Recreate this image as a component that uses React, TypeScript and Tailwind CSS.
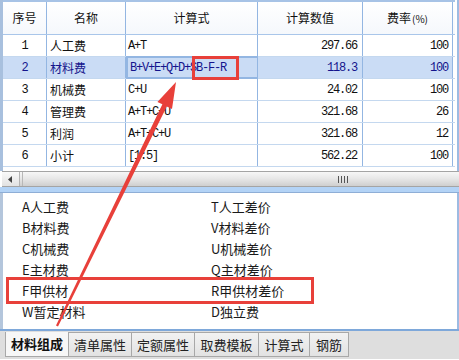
import React from 'react';

const SONG = '"Liberation Mono", "Noto Sans CJK SC", monospace';
const HEI = '"Noto Sans CJK SC", "Noto Sans", sans-serif';

const rows = [
  { no: '1', name: '人工费', expr: 'A+T', val: '297.66', rate: '100' },
  { no: '2', name: '材料费', expr: 'B+V+E+Q+D+SB-F-R', val: '118.3', rate: '100' },
  { no: '3', name: '机械费', expr: 'C+U', val: '24.02', rate: '100' },
  { no: '4', name: '管理费', expr: 'A+T+C+U', val: '321.68', rate: '26' },
  { no: '5', name: '利润', expr: 'A+T+C+U', val: '321.68', rate: '12' },
  { no: '6', name: '小计', expr: '[1:5]', val: '562.22', rate: '100' },
];

const codes: [string, string][] = [
  ['A人工费', 'T人工差价'],
  ['B材料费', 'V材料差价'],
  ['C机械费', 'U机械差价'],
  ['E主材费', 'Q主材差价'],
  ['F甲供材', 'R甲供材差价'],
  ['W暂定材料', 'D独立费'],
];

const tabs = [
  { label: '材料组成', w: 'w-[64px]' },
  { label: '清单属性', w: 'w-[64px]' },
  { label: '定额属性', w: 'w-[64px]' },
  { label: '取费模板', w: 'w-[65px]' },
  { label: '计算式', w: 'w-[52px]' },
  { label: '钢筋', w: 'w-[40px]' },
];

const Ascii: React.FC<{ children: React.ReactNode }> = ({ children }) => (
  <span className="text-[12px] tracking-[-1.2px]" style={{ fontFamily: SONG }}>
    {children}
  </span>
);

export default function App() {
  return (
    <div className="relative w-[459px] h-[360px] overflow-hidden bg-white" style={{ fontFamily: HEI }}>
      {/* grid */}
      <div className="flex flex-col border-l-[3px] border-[#a8c0de] pr-[2px] border-r-2 border-r-[#9dbbe2]">
        <div className="flex h-[35px] border-t-2 border-t-[#a7c3e6] border-b border-b-[#a9c6ea] bg-gradient-to-b from-white to-[#f5f8fc] text-[12px] text-[#111]">
          <div className="w-[44px] flex items-center justify-center border-r border-[#93b6e2]">序号</div>
          <div className="w-[79px] flex items-center justify-center border-r border-[#93b6e2]">名称</div>
          <div className="w-[132px] flex items-center justify-center border-r border-[#93b6e2]">计算式</div>
          <div className="w-[105px] flex items-center justify-center border-r border-[#93b6e2]">计算数值</div>
          <div className="w-[90px] flex items-center justify-center border-r border-[#93b6e2]">
            费率<span className="text-[10px] ml-[1px]">(%)</span>
          </div>
          <div className="flex-1" />
        </div>
        {rows.map((r, i) => {
          const sel = i === 1;
          return (
            <div
              key={r.no}
              className={`flex h-[22px] border-b border-[#c4d8ef] text-[12px] ${sel ? 'bg-[#cadcf5] text-[#14148c]' : 'text-[#111]'}`}
            >
              <div className="w-[44px] flex items-center justify-center border-r border-[#93b6e2]">
                <Ascii>{r.no}</Ascii>
              </div>
              <div className="w-[79px] flex items-center pl-[3px] border-r border-[#93b6e2]">{r.name}</div>
              <div
                className={`w-[132px] flex items-center pl-[2px] border-r border-[#93b6e2] ${sel ? 'border-[2px] border-[#1a2f94] pl-[1px] -my-[1px]' : ''}`}
              >
                <Ascii>{r.expr}</Ascii>
              </div>
              <div className="w-[105px] flex items-center justify-end pr-[5px] border-r border-[#93b6e2]">
                <Ascii>{r.val}</Ascii>
              </div>
              <div className="w-[90px] flex items-center justify-end pr-[4px] border-r border-[#93b6e2]">
                <Ascii>{r.rate}</Ascii>
              </div>
              <div className="flex-1 bg-white" />
            </div>
          );
        })}
        <div className="h-[4px]" />
      </div>

      {/* horizontal scrollbar */}
      <div className="flex h-[16px] border-y border-[#a4a4a4] bg-gradient-to-b from-[#f7f7f7] via-[#e6e6e6] to-[#cfcfcf] ml-[2px]">
        <div className="w-[18px] flex items-center justify-center border-r border-[#b4b4b4] bg-gradient-to-b from-[#fafafa] to-[#e2e2e2]">
          <svg width="5" height="7" viewBox="0 0 5 7">
            <path d="M4 0 L0 3.5 L4 7 Z" fill="#444" />
          </svg>
        </div>
        <div className="flex-1 flex items-center justify-end pr-[111px] ml-[2px] border-l border-[#b8b8b8]">
          <div className="flex gap-[2px]">
            <div className="w-[1px] h-[7px] bg-[#555]" />
            <div className="w-[1px] h-[7px] bg-[#555]" />
            <div className="w-[1px] h-[7px] bg-[#555]" />
            <div className="w-[1px] h-[7px] bg-[#555]" />
          </div>
        </div>
      </div>

      {/* splitter band */}
      <div className="h-[6px] bg-[#b3d3f6] border-b border-[#8eaed6]" />

      {/* code list */}
      <div className="h-[136px] border-l-[3px] border-[#b4c6dc] border-r-2 border-r-[#9dbbe2] pt-[3px] text-[13px] text-[#1a1a1a]">
        {codes.map(([a, b]) => (
          <div key={a} className="flex h-[21px] items-center">
            <div className="w-[208px] pl-[19px]">{a}</div>
            <div>{b}</div>
          </div>
        ))}
      </div>

      {/* tabs */}
      <div className="h-[30px] border-t-2 border-[#7ea8da] bg-[#dedede] flex items-start pl-[5px] pt-[1px]">
        {tabs.map((t, i) => (
          <div
            key={t.label}
            className={`${t.w} h-[25px] flex items-center justify-center text-[13px] border border-[#a8a8a8] -ml-[1px] first:ml-0 ${
              i === 0 ? 'bg-[#f7f7f7] font-bold text-[#111] border-t-0' : 'bg-gradient-to-b from-[#f2f2f2] to-[#e2e2e2] text-[#222]'
            }`}
          >
            {t.label}
          </div>
        ))}
      </div>

      {/* annotations */}
      <div className="absolute left-[192px] top-[56px] w-[47px] h-[24px] border-[3px] border-[#e8403a]" />
      <div className="absolute left-[6px] top-[277px] w-[308px] h-[27px] border-[3px] border-[#e8403a]" />
      <svg className="absolute inset-0 pointer-events-none" width="459" height="360" viewBox="0 0 459 360">
        <polygon
          points="176,82 172,109 166.8,106.5 58,326.5 56,325.5 162.4,104.3 157.4,101.9"
          fill="#e8403a"
        />
      </svg>
    </div>
  );
}
